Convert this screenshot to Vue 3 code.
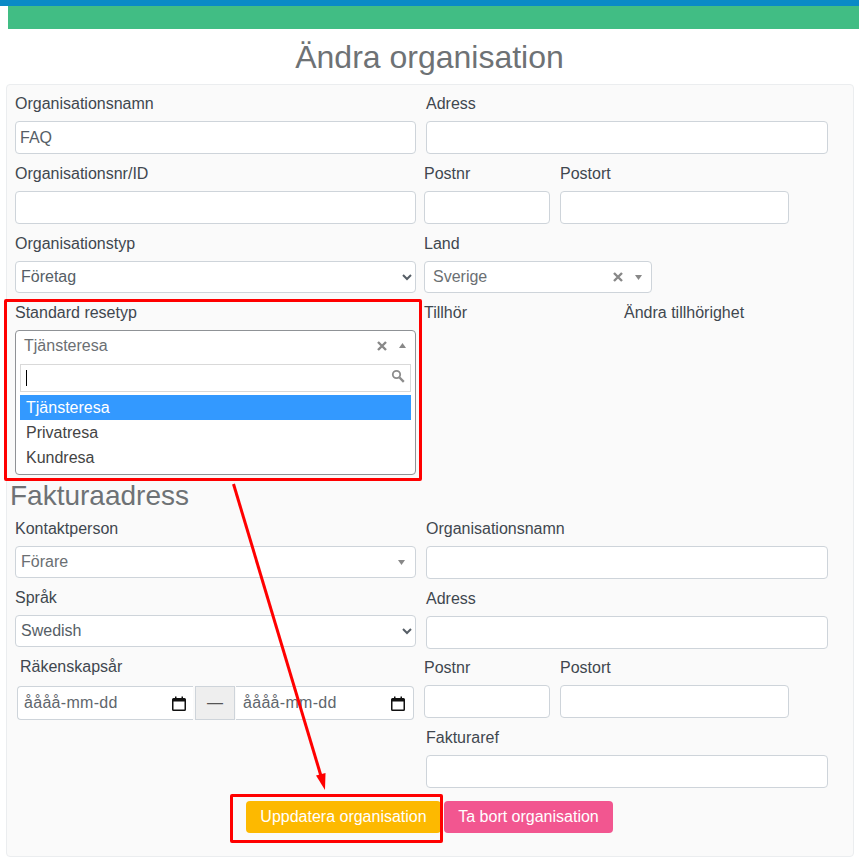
<script setup>
import { ref } from 'vue'
const options = ['Tjänsteresa', 'Privatresa', 'Kundresa']
const orgType = ref('Företag')
const lang = ref('Swedish')
</script>

<template>
  <div class="page">
    <div class="topbar"></div>
    <div class="greenbar"></div>
    <h1 class="title">Ändra organisation</h1>

    <form class="card" @submit.prevent>
      <div class="columns">
        <div class="col-left">
          <div class="row">
            <label>Organisationsnamn</label>
            <input class="field" value="FAQ" />
          </div>
          <div class="row">
            <label>Organisationsnr/ID</label>
            <input class="field" />
          </div>
          <div class="row row-select">
            <label>Organisationstyp</label>
            <select class="field native" v-model="orgType"><option>Företag</option></select>
          </div>
          <div class="row-open">
            <label>Standard resetyp</label>
            <div class="dropdown">
              <div class="dd-head">
                <span>Tjänsteresa</span>
                <svg class="x" width="10" height="10" viewBox="0 0 10 10"><path d="M1 1l8 8M9 1l-8 8" stroke="#888" stroke-width="2.400"/></svg>
                <svg class="caret" width="7" height="5" viewBox="0 0 7 5"><path d="M3.500 0l3.500 5H0z" fill="#888"/></svg>
              </div>
              <div class="dd-search">
                <i class="cursor"></i>
                <svg class="lens" width="14" height="14" viewBox="0 0 14 14"><circle cx="5.500" cy="5.500" r="3.700" fill="none" stroke="#8c8c8c" stroke-width="1.800"/><path d="M8.500 8.500l4.300 4.300" stroke="#8c8c8c" stroke-width="2.400"/></svg>
              </div>
              <ul class="dd-list">
                <li v-for="(o, i) in options" :key="o" :class="{ active: i === 0 }">{{ o }}</li>
              </ul>
            </div>
          </div>
          <h2 class="subtitle">Fakturaadress</h2>
          <div class="row row-select">
            <label>Kontaktperson</label>
            <div class="field fake contact">
              <span>Förare</span>
              <svg width="7" height="5" viewBox="0 0 7 5"><path d="M0 0h7L3.500 5z" fill="#888"/></svg>
            </div>
          </div>
          <div class="row row-select">
            <label>Språk</label>
            <select class="field native" v-model="lang"><option>Swedish</option></select>
          </div>
          <div class="row-date">
            <label>Räkenskapsår</label>
            <div class="dates">
              <div class="date d1">
                <span>åååå-mm-dd</span>
                <svg width="14" height="15" viewBox="0 0 14 15"><path d="M1.500 2h11A1.500 1.500 0 0 1 14 3.500v10a1.500 1.500 0 0 1-1.500 1.500h-11A1.500 1.500 0 0 1 0 13.500v-10A1.500 1.500 0 0 1 1.500 2zM1.500 5.500v8h11v-8z" fill="#111" fill-rule="evenodd"/><path d="M3 .5h1.500V3H3zM9.500 .5H11V3H9.500z" fill="#111"/></svg>
              </div>
              <div class="addon">—</div>
              <div class="date d2">
                <span>åååå-mm-dd</span>
                <svg width="14" height="15" viewBox="0 0 14 15"><path d="M1.500 2h11A1.500 1.500 0 0 1 14 3.500v10a1.500 1.500 0 0 1-1.500 1.500h-11A1.500 1.500 0 0 1 0 13.500v-10A1.500 1.500 0 0 1 1.500 2zM1.500 5.500v8h11v-8z" fill="#111" fill-rule="evenodd"/><path d="M3 .5h1.500V3H3zM9.500 .5H11V3H9.500z" fill="#111"/></svg>
              </div>
            </div>
          </div>
        </div>

        <div class="col-right">
          <div class="row indent">
            <label>Adress</label>
            <input class="field wide" />
          </div>
          <div class="row split">
            <div class="cell-a"><label>Postnr</label><input class="field" /></div>
            <div class="cell-b"><label>Postort</label><input class="field" /></div>
          </div>
          <div class="row row-select">
            <label>Land</label>
            <div class="field fake land">
              <span>Sverige</span>
              <svg class="x" width="10" height="10" viewBox="0 0 10 10"><path d="M1 1l8 8M9 1l-8 8" stroke="#888" stroke-width="2.400"/></svg>
              <svg class="caret" width="7" height="5" viewBox="0 0 7 5"><path d="M0 0h7L3.500 5z" fill="#888"/></svg>
            </div>
          </div>
          <div class="belong">
            <label class="b1">Tillhör</label>
            <label>Ändra tillhörighet</label>
          </div>
          <div class="row indent">
            <label>Organisationsnamn</label>
            <input class="field wide" />
          </div>
          <div class="row row-select indent">
            <label>Adress</label>
            <input class="field wide" />
          </div>
          <div class="row split">
            <div class="cell-a"><label>Postnr</label><input class="field" /></div>
            <div class="cell-b"><label>Postort</label><input class="field" /></div>
          </div>
          <div class="row indent">
            <label>Fakturaref</label>
            <input class="field wide" />
          </div>
        </div>
      </div>

      <div class="actions">
        <button class="btn amber" type="button">Uppdatera organisation</button>
        <button class="btn pink" type="button">Ta bort organisation</button>
      </div>
    </form>

    <div class="mark mark-a"></div>
    <div class="mark mark-b"></div>
    <svg class="arrow" width="859" height="867" viewBox="0 0 859 867">
      <path d="M233.500 484L321 776" stroke="#f00" stroke-width="3" fill="none"/>
      <path d="M325 790L316 775.500L325.500 773z" fill="#f00"/>
    </svg>
  </div>
</template>

<style>
html, body { margin: 0; background: #fff; }
</style>

<style scoped>
* { box-sizing: border-box; }
.page {
  position: relative;
  width: 859px;
  height: 867px;
  overflow: hidden;
  font-family: "Liberation Sans", Arial, sans-serif;
  font-size: 16px;
  color: #3f474f;
}
.topbar { height: 6px; background: #0a8ac6; }
.greenbar { height: 23px; margin-left: 8px; background: #41bd84; }
.title {
  margin: 0;
  height: 55px;
  font-size: 32px;
  line-height: 57px;
  font-weight: 400;
  text-align: center;
  color: #6e7275;
}
.card {
  margin-left: 6px;
  width: 848px;
  height: 773px;
  padding-top: 7px;
  background: #fafafa;
  border: 1px solid #ebedef;
  border-radius: 4px;
}
.columns { display: flex; }
.col-left { width: 401px; margin-left: 8px; }
.col-right { width: 404px; margin-left: 8px; }
label { display: block; height: 24px; line-height: 24px; margin-bottom: 5px; white-space: nowrap; }
.row { height: 70px; }
.row-select { height: 69px; }
.field {
  display: block;
  width: 100%;
  height: 33px;
  padding: 0 4px;
  font: inherit;
  color: #565e66;
  background: #fff;
  border: 1px solid #ced4da;
  border-radius: 4px;
  outline: none;
}
select.native { height: 32px; padding: 0 1px 2px; }
.fake { display: flex; align-items: center; height: 32px; padding: 0 5px; color: #6b6f73; }
.fake span { flex: 1; }
.contact { padding-right: 10px; }
.indent { padding-left: 2px; }
.wide { width: 402px; }
.split { display: flex; }
.cell-a { width: 126px; }
.cell-b { width: 229px; margin-left: 10px; }
.land { width: 228px; padding: 0 9px 0 8px; }
.land .x { margin-right: 12px; }
.belong { display: flex; height: 216px; }
.b1 { width: 200px; }

.row-open { height: 180px; }
.dropdown {
  height: 145px;
  background: #fff;
  border: 1px solid #8f9296;
  border-radius: 4px;
  padding: 0 4px;
}
.dd-head {
  display: flex;
  align-items: center;
  height: 29px;
  padding: 0 5px 0 4px;
  color: #6b6f73;
}
.dd-head span { flex: 1; }
.dd-head .x { margin-right: 12px; }
.dd-search {
  position: relative;
  height: 28px;
  margin-top: 4px;
  background: #fff;
  border: 1px solid #d9d9d9;
}
.cursor { position: absolute; left: 5px; top: 5px; width: 1px; height: 16px; background: #000; }
.lens { position: absolute; right: 5px; top: 4px; }
.dd-list { list-style: none; margin: 3px 0 0; padding: 0; }
.dd-list li { height: 25px; line-height: 25px; padding-left: 6px; color: #444; }
.dd-list li.active { background: #3399ff; color: #fff; }

.subtitle {
  margin: 0 0 0 -5px;
  height: 36px;
  font-size: 28px;
  line-height: 30px;
  font-weight: 400;
  color: #6e7275;
}
.row-date label { padding-left: 5px; margin-bottom: 7px; }
.dates { display: flex; width: 397px; height: 34px; margin-left: 2px; }
.date {
  display: flex;
  align-items: center;
  justify-content: space-between;
  background: #fff;
  border: 1px solid #ced4da;
  padding: 0 7px 0 6px;
  color: #5f666d;
  letter-spacing: .3px;
}
.d1 { width: 176px; border-radius: 4px 0 0 4px; border-right: 0; }
.d2 { width: 178px; border-radius: 0 4px 4px 0; border-left: 0; padding: 0 8px 0 7px; }
.addon {
  width: 40px;
  margin: 0 1px 0 2px;
  line-height: 32px;
  text-align: center;
  color: #555;
  background: #eee;
  border: 1px solid #ced4da;
}
.actions { display: flex; margin: 5px 0 0 239px; gap: 3px; }
.btn {
  height: 32px;
  padding: 0 14px;
  font: inherit;
  color: #fff;
  border: 0;
  border-radius: 4px;
}
.amber { width: 195px; background: #fdb900; }
.pink { width: 169px; background: #f25690; }
.mark { position: absolute; border: 3px solid #f00; border-radius: 2px; pointer-events: none; }
.mark-a { left: 4px; top: 299px; width: 418px; height: 182px; }
.mark-b { left: 230px; top: 794px; width: 213px; height: 49px; }
.arrow { position: absolute; left: 0; top: 0; pointer-events: none; }
</style>
